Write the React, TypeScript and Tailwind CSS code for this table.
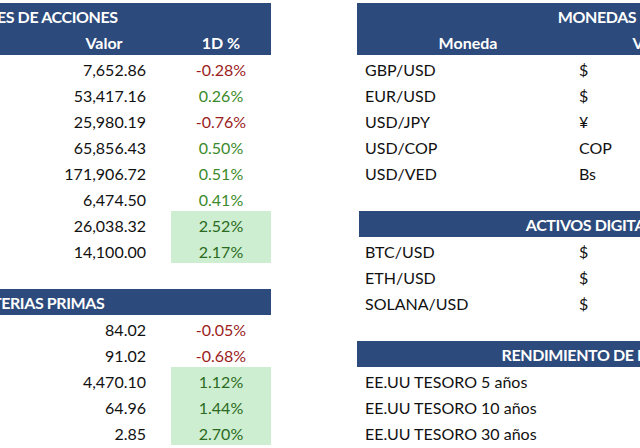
const HEAD = "bg-[#2c4a7b] text-white font-bold";
const UP = "text-[#3b8a2b]";
const DOWN = "text-[#9b1d1d]";
const GOOD = "bg-[#cdeed0] text-[#2b6a21]";

type Quote = { value: string; change: string; good?: boolean };

const acciones: Quote[] = [
  { value: "7,652.86", change: "-0.28%" },
  { value: "53,417.16", change: "0.26%" },
  { value: "25,980.19", change: "-0.76%" },
  { value: "65,856.43", change: "0.50%" },
  { value: "171,906.72", change: "0.51%" },
  { value: "6,474.50", change: "0.41%" },
  { value: "26,038.32", change: "2.52%", good: true },
  { value: "14,100.00", change: "2.17%", good: true },
];

const materias: Quote[] = [
  { value: "84.02", change: "-0.05%" },
  { value: "91.02", change: "-0.68%" },
  { value: "4,470.10", change: "1.12%", good: true },
  { value: "64.96", change: "1.44%", good: true },
  { value: "2.85", change: "2.70%", good: true },
];

const monedas = [
  ["GBP/USD", "$"],
  ["EUR/USD", "$"],
  ["USD/JPY", "¥"],
  ["USD/COP", "COP"],
  ["USD/VED", "Bs"],
];

const digitales = [
  ["BTC/USD", "$"],
  ["ETH/USD", "$"],
  ["SOLANA/USD", "$"],
];

const bonos = ["EE.UU TESORO 5 años", "EE.UU TESORO 10 años", "EE.UU TESORO 30 años"];

const leftCols = "grid grid-cols-[257px_92px_21px_100px] h-[26px] items-center";
const rightCols = "grid grid-cols-[222px_21px_102px_1fr] h-[26px] items-center";

function Title({ children, className = "" }: { children: string; className?: string }) {
  return (
    <div
      className={`${HEAD} h-[26px] pt-[2px] flex items-center justify-center whitespace-nowrap tracking-[-0.4px] ${className}`}
    >
      {children}
    </div>
  );
}

function QuoteRow({ q }: { q: Quote }) {
  const tone = q.good ? GOOD : q.change.startsWith("-") ? DOWN : UP;
  return (
    <div className={leftCols}>
      <div />
      <div className="text-right pr-1 pt-[4px] text-[#111]">{q.value}</div>
      <div />
      <div className={`h-full pt-[4px] flex items-center justify-center ${tone}`}>{q.change}</div>
    </div>
  );
}

function PairRow({ name, sym }: { name: string; sym: string }) {
  return (
    <div className={rightCols}>
      <div className="pl-2 pt-[4px] whitespace-nowrap">{name}</div>
      <div className="pt-[4px] whitespace-nowrap">{sym}</div>
      <div />
      <div />
    </div>
  );
}

export default function App() {
  return (
    <div className="w-[640px] h-[448px] overflow-hidden bg-white flex text-[16px] leading-none text-[#111] [font-family:Lato,sans-serif]">
      {/* left: índices + materias primas */}
      <div className="-ml-[199px] w-[470px] shrink-0 flex flex-col pt-[3px]">
        <Title>ÍNDICES DE ACCIONES</Title>
        <div className={`${leftCols} ${HEAD}`}>
          <div />
          <div className="text-center pt-[2px]">Valor</div>
          <div />
          <div className="text-center pt-[2px]">1D %</div>
        </div>
        {acciones.map((q) => (
          <QuoteRow key={q.value} q={q} />
        ))}
        <div className="h-[26px]" />
        <Title>MATERIAS PRIMAS</Title>
        {materias.map((q) => (
          <QuoteRow key={q.value} q={q} />
        ))}
      </div>

      {/* right: monedas, activos digitales, bonos */}
      <div className="ml-[86px] w-[480px] shrink-0 flex flex-col pt-[3px]">
        <Title>MONEDAS</Title>
        <div className={`${rightCols} ${HEAD}`}>
          <div className="text-center pt-[2px]">Moneda</div>
          <div />
          <div className="text-center pt-[2px]">Valor</div>
          <div />
        </div>
        {monedas.map(([n, s]) => (
          <PairRow key={n} name={n} sym={s} />
        ))}
        <div className="h-[26px]" />
        <Title className="ml-[2px]">ACTIVOS DIGITALES</Title>
        {digitales.map(([n, s]) => (
          <PairRow key={n} name={n} sym={s} />
        ))}
        <div className="h-[26px]" />
        <Title>RENDIMIENTO DE BONOS</Title>
        {bonos.map((b) => (
          <div key={b} className="h-[26px] pt-[4px] flex items-center pl-2 whitespace-nowrap">
            {b}
          </div>
        ))}
      </div>
    </div>
  );
}
